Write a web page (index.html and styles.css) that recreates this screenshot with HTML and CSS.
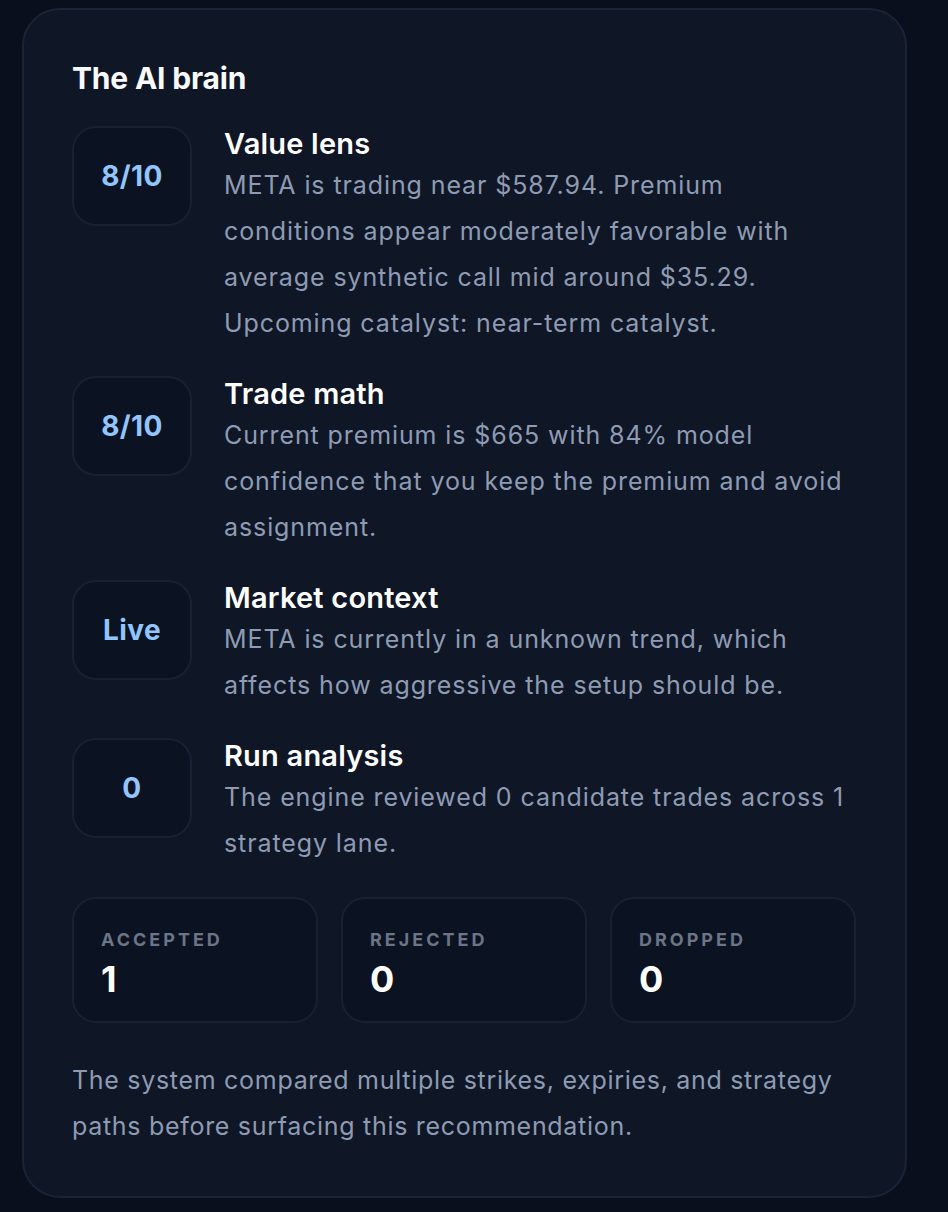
FILE: index.html
```html
<!DOCTYPE html>
<html lang="en">
<head>
<meta charset="utf-8">
<title>The AI brain</title>
<link rel="stylesheet" href="styles.css">
</head>
<body>
<section class="card">
  <h2 class="title">The AI brain</h2>
  <div class="rows">
    <div class="row">
      <div class="score">8/10</div>
      <div class="body">
        <h3 class="heading">Value lens</h3>
        <p class="desc">META is trading near $587.94. Premium conditions appear moderately favorable with average synthetic call mid around $35.29. Upcoming catalyst: near-term catalyst.</p>
      </div>
    </div>
    <div class="row">
      <div class="score">8/10</div>
      <div class="body">
        <h3 class="heading">Trade math</h3>
        <p class="desc">Current premium is $665 with 84% model confidence that you keep the premium and avoid assignment.</p>
      </div>
    </div>
    <div class="row">
      <div class="score">Live</div>
      <div class="body">
        <h3 class="heading">Market context</h3>
        <p class="desc">META is currently in a unknown trend, which affects how aggressive the setup should be.</p>
      </div>
    </div>
    <div class="row">
      <div class="score">0</div>
      <div class="body">
        <h3 class="heading">Run analysis</h3>
        <p class="desc">The engine reviewed 0 candidate trades across 1 strategy lane.</p>
      </div>
    </div>
  </div>
  <div class="stats">
    <div class="stat"><div class="stat-label">Accepted</div><div class="stat-value">1</div></div>
    <div class="stat"><div class="stat-label">Rejected</div><div class="stat-value">0</div></div>
    <div class="stat"><div class="stat-label">Dropped</div><div class="stat-value">0</div></div>
  </div>
  <p class="footer">The system compared multiple strikes, expiries, and strategy paths before surfacing this recommendation.</p>
</section>
</body>
</html>
```
FILE: styles.css
```css
* { box-sizing: border-box; }
html, body { margin: 0; }
body {
  background: #0a0f1e;
  font-family: Inter, "Noto Sans", "Liberation Sans", sans-serif;
  padding: 8px 0 0 22px;
  min-height: 1212px;
}
.card {
  width: 885px;
  background: #0f1626;
  border: 2px solid #1a2435;
  border-radius: 38px;
  padding: 48px 49px 47px 48px;
}
.title {
  margin: 0 0 28px;
  font-size: 30px;
  line-height: 40px;
  font-weight: 700;
  color: #f8fafc;
  letter-spacing: -0.2px;
}
.rows {
  display: flex;
  flex-direction: column;
  gap: 30px;
}
.row {
  display: flex;
  gap: 32px;
  align-items: flex-start;
}
.score {
  flex: none;
  width: 120px;
  height: 100px;
  border: 2px solid #172134;
  border-radius: 24px;
  background: #0b1221;
  display: flex;
  align-items: center;
  justify-content: center;
  color: #93c5fd;
  font-size: 28px;
  font-weight: 700;
  letter-spacing: 0.4px;
}
.body { flex: 1; min-width: 0; }
.heading {
  margin: 0;
  font-size: 29px;
  line-height: 36px;
  font-weight: 600;
  color: #ffffff;
  letter-spacing: 0.2px;
}
.desc {
  margin: 0;
  font-size: 25px;
  line-height: 46px;
  color: #8e9bb2;
  letter-spacing: 0.9px;
}
.stats {
  display: grid;
  grid-template-columns: repeat(3, 1fr);
  gap: 23px;
  margin-top: 31px;
}
.stat {
  height: 126px;
  border: 2px solid #172134;
  border-radius: 24px;
  background: #0b1221;
  padding: 30px 27px 0;
}
.stat-label {
  font-size: 18px;
  line-height: 22px;
  font-weight: 700;
  letter-spacing: 3px;
  text-transform: uppercase;
  color: #6b7587;
}
.stat-value {
  margin-top: 6px;
  font-size: 36px;
  line-height: 44px;
  font-weight: 700;
  color: #ffffff;
}
.footer {
  margin: 34px 0 0;
  font-size: 25px;
  line-height: 46px;
  color: #8e9bb2;
  letter-spacing: 0.7px;
}
```
